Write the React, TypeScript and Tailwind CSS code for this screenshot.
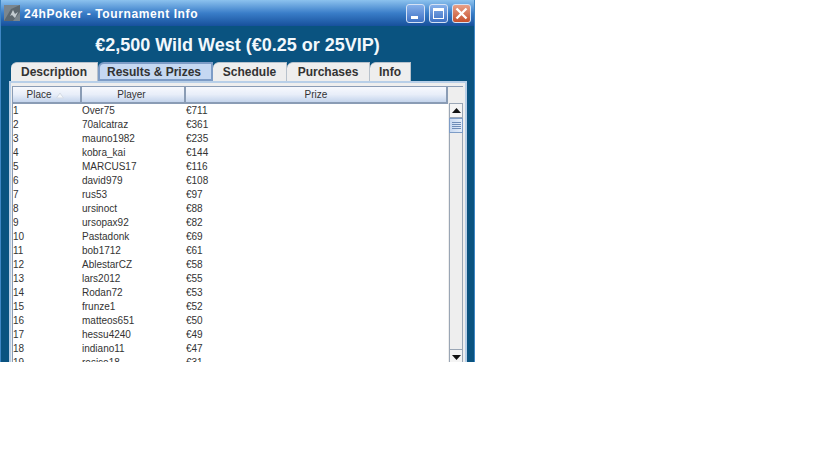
const players: [string, string][] = [
  ['Over75', '€711'],
  ['70alcatraz', '€361'],
  ['mauno1982', '€235'],
  ['kobra_kai', '€144'],
  ['MARCUS17', '€116'],
  ['david979', '€108'],
  ['rus53', '€97'],
  ['ursinoct', '€88'],
  ['ursopax92', '€82'],
  ['Pastadonk', '€69'],
  ['bob1712', '€61'],
  ['AblestarCZ', '€58'],
  ['lars2012', '€55'],
  ['Rodan72', '€53'],
  ['frunze1', '€52'],
  ['matteos651', '€50'],
  ['hessu4240', '€49'],
  ['indiano11', '€47'],
  ['rosico18', '€31'],
];

const tabs = [
  { label: 'Description', width: 'w-[87px]', active: false },
  { label: 'Results & Prizes', width: 'w-[115px]', active: true },
  { label: 'Schedule', width: 'w-[74px]', active: false },
  { label: 'Purchases', width: 'w-[83px]', active: false },
  { label: 'Info', width: 'w-[41px]', active: false },
];

function WindowButton({ kind }: { kind: 'min' | 'max' | 'close' }) {
  const bg =
    kind === 'close'
      ? 'bg-gradient-to-b from-[#e8a088] to-[#c44f2c]'
      : 'bg-gradient-to-b from-[#86b0ea] to-[#3f71c4]';
  return (
    <div className={`w-[19px] h-[19px] rounded-[3px] border border-[#d5e2f5] flex items-center justify-center ${bg}`}>
      {kind === 'min' && <div className="w-[7px] h-[3px] bg-white mt-[8px] mr-[2px]" />}
      {kind === 'max' && <div className="w-[11px] h-[11px] border border-white border-t-[3px]" />}
      {kind === 'close' && (
        <svg width="13" height="13" viewBox="0 0 13 13">
          <path d="M1.5 1.5 L11.5 11.5 M11.5 1.5 L1.5 11.5" stroke="#fff" strokeWidth="2.4" />
        </svg>
      )}
    </div>
  );
}

function ColumnHeader({ width, children }: { width: string; children: React.ReactNode }) {
  return (
    <div className={`${width} h-[17px] pt-px flex items-center justify-center bg-gradient-to-b from-[#f7f9fd] via-[#e8eef9] to-[#c4d4ec] border-r-2 border-b-2 border-[#8a9cb5] text-[10px] leading-none text-[#333]`}>
      {children}
    </div>
  );
}

export default function App() {
  return (
    <div className="w-[819px] h-[460px] bg-white font-['Liberation_Sans',Arial,sans-serif]">
      <div className="w-[475px] h-[362px] overflow-hidden flex flex-col bg-[#0a5380] border-x border-[#3f86c4]">
        {/* Title bar */}
        <div className="h-[26px] shrink-0 flex items-center pl-[3px] pr-[3px] bg-gradient-to-b from-[#8cc2ee] via-[#3a7ec9] to-[#17509c]">
          <svg width="16" height="16" viewBox="0 0 16 16">
            <rect width="16" height="16" fill="#7b868e" />
            <path d="M0 16 L7 4 L16 0 L16 7 L9 16 Z" fill="#5d6870" />
            <path d="M6 11 L9 5 L11 9 L14 7 L11 13 L8 10 Z" fill="#c4ccd1" />
          </svg>
          <span className="ml-[4px] pt-[2px] text-[12px] font-bold tracking-[0.6px] text-white">
            24hPoker - Tournament Info
          </span>
          <div className="ml-auto flex gap-[4px]">
            <WindowButton kind="min" />
            <WindowButton kind="max" />
            <WindowButton kind="close" />
          </div>
        </div>

        {/* Tournament name */}
        <div className="h-[36px] shrink-0 flex items-center justify-center text-[18px] font-bold text-[#f2f8fc] pt-[3px]">
          €2,500 Wild West (€0.25 or 25VIP)
        </div>

        {/* Tabs */}
        <div className="h-[19px] shrink-0 flex items-end pl-[10px]">
          {tabs.map((tab) => (
            <div
              key={tab.label}
              className={`${tab.width} h-[19px] flex items-center justify-center rounded-tl-[6px] text-[12px] font-bold text-[#333] ${
                tab.active
                  ? 'bg-[#c5d8f2] border-2 border-[#7d9cc6] pr-[3px]'
                  : 'bg-[#eeeeee] border-r border-t border-[#b8c2cc]'
              }`}
            >
              {tab.label}
            </div>
          ))}
        </div>

        {/* Panel */}
        <div className="flex-1 min-h-0 ml-[8px] mr-[7px] border-2 border-b-0 border-[#b8cfe8] bg-[#eeeeee] pt-[3px] pl-px pr-[2px] flex flex-col overflow-hidden">
          <div className="flex-1 min-h-0 flex border-l border-t border-[#8a9cb5] overflow-hidden">
            <div className="flex-1 min-w-0 flex flex-col bg-white">
              <div className="flex shrink-0">
                <ColumnHeader width="w-[69px]">
                  <span className="-ml-[3px]">Place</span>
                  <svg className="ml-[4px]" width="8" height="7" viewBox="0 0 8 7">
                    <path d="M4 1 L7.5 6 L0.5 6 Z" fill="#f6f8fb" stroke="#d5dbe5" strokeWidth="1" />
                  </svg>
                </ColumnHeader>
                <ColumnHeader width="w-[104px]">
                  <span className="-ml-[3px]">Player</span>
                </ColumnHeader>
                <ColumnHeader width="flex-1">Prize</ColumnHeader>
              </div>
              <div className="flex-1 min-h-0 overflow-hidden">
                {players.map(([name, prize], i) => (
                  <div key={name} className="h-[14px] flex items-center text-[10px] leading-none text-[#333]">
                    <span className="w-[69px]">{i + 1}</span>
                    <span className="w-[104px]">{name}</span>
                    <span>{prize}</span>
                  </div>
                ))}
              </div>
            </div>

            {/* Scrollbar */}
            <div className="w-[15px] shrink-0 flex flex-col bg-[#eeeeee] border-l border-[#eeeeee]">
              <div className="h-[16px] shrink-0" />
              <div className="h-[15px] shrink-0 flex items-center justify-center bg-[#f4f4f4] border border-[#9aa6b5]">
                <svg width="9" height="5" viewBox="0 0 9 5">
                  <path d="M4.5 0 L9 5 L0 5 Z" fill="#111" />
                </svg>
              </div>
              <div className="h-[15px] shrink-0 flex flex-col items-center justify-center gap-px bg-gradient-to-r from-[#c8d9f1] to-[#e4edf9] border border-[#7d9cc6]">
                <div className="w-[9px] h-px bg-[#6f8db8]" />
                <div className="w-[9px] h-px bg-[#6f8db8]" />
                <div className="w-[9px] h-px bg-[#6f8db8]" />
                <div className="w-[9px] h-px bg-[#6f8db8]" />
              </div>
              <div className="flex-1 min-h-0 border-x border-[#9aa6b5]" />
              <div className="h-[13px] shrink-0 pt-[2px] flex items-center justify-center bg-[#f4f4f4] border-x border-t border-[#9aa6b5]">
                <svg width="9" height="5" viewBox="0 0 9 5">
                  <path d="M0 0 L9 0 L4.5 5 Z" fill="#111" />
                </svg>
              </div>
            </div>
          </div>
        </div>
      </div>
    </div>
  );
}
